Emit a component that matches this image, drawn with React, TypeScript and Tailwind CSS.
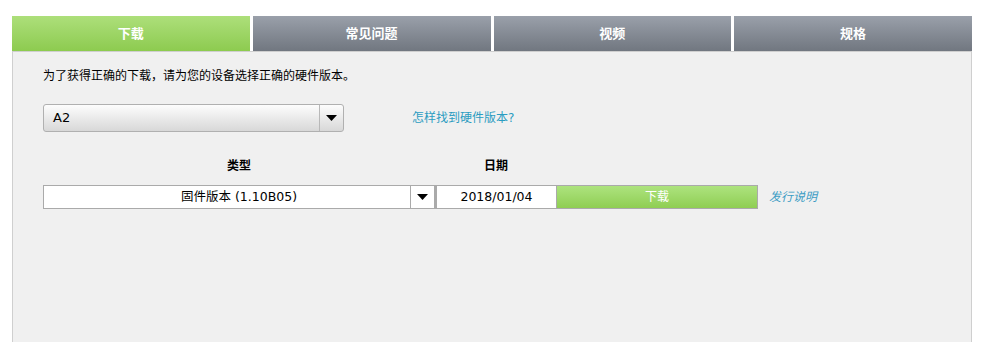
const tabs = ["下载", "常见问题", "视频", "规格"]

const font = "[font-family:'DejaVu_Sans','Noto_Sans_CJK_SC',sans-serif]"

function Caret() {
  return (
    <svg width="11" height="6" viewBox="0 0 11 6">
      <path d="M0 0h11L5.5 6z" fill="#000" />
    </svg>
  )
}

export default function App() {
  return (
    <div className={`w-[989px] h-[342px] bg-white pt-[16px] pl-[12px] overflow-hidden ${font}`}>

      {/* TABS */}

      <div className="flex gap-[3px] w-[960px] h-[35px]">
        {tabs.map((tab, i) => (
          <div
            key={tab}
            className={`flex-1 flex items-center justify-center text-white text-[13px] font-bold ${
              i === 0
                ? "bg-gradient-to-b from-[#addf7a] to-[#8dcb4f]"
                : "bg-gradient-to-b from-[#9aa0aa] to-[#717780]"
            }`}
          >
            {tab}
          </div>
        ))}
      </div>

      {/* PANEL */}

      <div className="w-[960px] h-[291px] bg-[#f0f0f0] border-x border-t border-[#cfcfcf] pl-[30px] pt-[16px] text-[12px] text-black">

        <p className="leading-[16px]">为了获得正确的下载，请为您的设备选择正确的硬件版本。</p>

        <div className="flex items-center mt-[20px]">
          <div className="flex w-[301px] h-[28px] rounded-[3px] border border-[#b0b0b0] bg-gradient-to-b from-[#fdfdfd] to-[#d8d8d8]">
            <span className="flex-1 flex items-center pl-[9px] text-[13px]">A2</span>
            <span className="w-[24px] flex items-center justify-center border-l border-[#b8b8b8]">
              <Caret />
            </span>
          </div>
          <span className="ml-[68px] text-[#2b9cc1] text-[12px]">怎样找到硬件版本?</span>
        </div>

        <div className="flex mt-[26px] leading-[16px] font-bold">
          <span className="w-[392px] text-center">类型</span>
          <span className="w-[122px] text-center">日期</span>
        </div>

        <div className="flex items-center mt-[11px]">
          <div className="flex w-[392px] h-[24px] border border-[#aaa] bg-white">
            <span className="flex-1 flex items-center justify-center pl-[24px] text-[12.5px]">固件版本 (1.10B05)</span>
            <span className="w-[24px] flex items-center justify-center border-l border-[#aaa]">
              <Caret />
            </span>
          </div>
          <div className="w-[122px] h-[24px] border border-[#aaa] border-l-2 bg-white flex items-center justify-center text-[12.5px]">
            2018/01/04
          </div>
          <div className="w-[201px] h-[24px] border-y border-r border-[#aaa] bg-gradient-to-b from-[#ade37e] to-[#8fce52] flex items-center justify-center text-white text-[12px]">
            下载
          </div>
          <span className="ml-[11px] italic text-[#3a9cc4] text-[12px]">发行说明</span>
        </div>

      </div>

    </div>
  )
}
